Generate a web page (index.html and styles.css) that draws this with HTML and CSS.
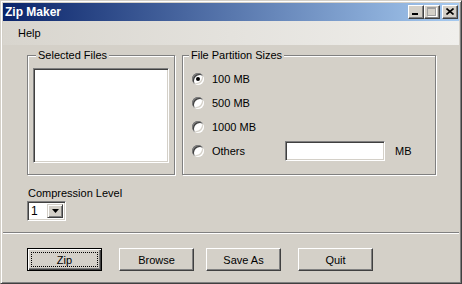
FILE: index.html
```html
<!DOCTYPE html>
<html lang="en">
<head>
  <meta charset="UTF-8" />
  <title>Zip Maker</title>
  <link rel="stylesheet" href="styles.css">
</head>
<body>
  <div class="window">
    <div class="titlebar">
      <span class="title">Zip Maker</span>
      <div class="caption-buttons">
        <span class="cap min"><span class="min-bar"></span></span>
        <span class="cap max"><span class="max-box"></span></span>
        <span class="cap close">
          <svg width="8" height="7" viewBox="0 0 8 7">
            <path d="M0.5 0.5 L7.5 6.5 M7.5 0.5 L0.5 6.5" stroke="#000" stroke-width="1.6" fill="none"/>
          </svg>
        </span>
      </div>
    </div>

    <div class="menubar">
      <span class="menu-item">Help</span>
    </div>

    <div class="content">
      <div class="groups">
        <fieldset class="group files">
          <legend>Selected Files</legend>
          <div class="listbox"></div>
        </fieldset>

        <fieldset class="group sizes">
          <legend>File Partition Sizes</legend>
          <div class="option"><span class="radio checked"></span><span class="option-text">100 MB</span></div>
          <div class="option"><span class="radio"></span><span class="option-text">500 MB</span></div>
          <div class="option"><span class="radio"></span><span class="option-text">1000 MB</span></div>
          <div class="option">
            <span class="radio"></span><span class="option-text other">Others</span>
            <span class="textbox"></span><span class="unit">MB</span>
          </div>
        </fieldset>
      </div>

      <div class="compression">
        <div class="field-label">Compression Level</div>
        <div class="combo">
          <span class="combo-value">1</span>
          <span class="combo-btn">
            <svg width="7" height="4" viewBox="0 0 7 4"><polygon points="0,0 7,0 3.5,4" fill="#000"/></svg>
          </span>
        </div>
      </div>
    </div>

    <div class="separator"></div>

    <div class="buttons">
      <div class="btn default"><span class="focus">Zip</span></div>
      <div class="btn">Browse</div>
      <div class="btn save">Save As</div>
      <div class="btn">Quit</div>
    </div>
  </div>
</body>
</html>
```

FILE: styles.css
```css
body {
  margin: 0;
  font-family: "Liberation Sans", Arial, sans-serif;
  font-size: 11px;
  color: #000;
  background: #d4d0c8;
}
.window {
  width: 462px;
  height: 284px;
  box-sizing: border-box;
  border: 1px solid;
  border-color: #d4d0c8 #404040 #404040 #d4d0c8;
  box-shadow: inset 1px 1px #fff, inset -1px -1px #808080;
  padding: 2px;
  background: #d4d0c8;
  display: flex;
  flex-direction: column;
}

/* title bar */
.titlebar {
  height: 18px;
  flex-shrink: 0;
  display: flex;
  align-items: center;
  justify-content: space-between;
  padding: 0 1px 0 2px;
  background: linear-gradient(to right, #0a246a, #a6caf0);
}
.title {
  color: #fff;
  font-weight: bold;
  font-size: 12px;
}
.caption-buttons {
  display: flex;
}
.cap {
  width: 16px;
  height: 14px;
  box-sizing: border-box;
  border: 1px solid;
  border-color: #fff #404040 #404040 #fff;
  box-shadow: inset -1px -1px #808080;
  background: #d4d0c8;
  display: flex;
}
.cap.min {
  align-items: flex-end;
  padding: 0 0 3px 3px;
}
.min-bar {
  width: 6px;
  height: 2px;
  background: #000;
}
.cap.max {
  align-items: flex-start;
  padding: 1px 0 0 2px;
}
.max-box {
  width: 9px;
  height: 9px;
  box-sizing: border-box;
  border: 1px solid #a0a0a0;
  border-top-width: 2px;
  box-shadow: 1px 1px #fff;
}
.cap.close {
  margin-left: 2px;
  align-items: center;
  justify-content: center;
  padding-bottom: 1px;
}

/* menu */
.menubar {
  height: 24px;
  flex-shrink: 0;
  display: flex;
  align-items: center;
  padding-left: 15px;
  background: linear-gradient(to right, #d8d5ce, #f0efec);
}

/* main area */
.content {
  flex: 1;
}
.groups {
  display: flex;
  align-items: stretch;
  padding: 4px 0 0 24px;
}
.group {
  margin: 0;
  border: 1px solid #808080;
  box-shadow: inset 1px 1px #fff, 1px 1px #fff;
  min-width: 0;
  box-sizing: border-box;
}
.group legend {
  padding: 0 2px;
  line-height: 13px;
  background: #d4d0c8;
}
.files {
  width: 148px;
  padding: 6px 5px 11px 5px;
}
.files legend {
  margin-left: 3px;
}
.listbox {
  width: 136px;
  height: 95px;
  box-sizing: border-box;
  background: #fff;
  border: 1px solid;
  border-color: #808080 #fff #fff #808080;
  box-shadow: inset 1px 1px #404040, inset -1px -1px #d4d0c8;
}
.sizes {
  width: 254px;
  margin-left: 7px;
  padding: 5px 6px 11px 6px;
}
.option {
  height: 24px;
  display: flex;
  align-items: center;
  padding-left: 3px;
}
.radio {
  width: 12px;
  height: 12px;
  border-radius: 50%;
  background: #fff;
  box-shadow: inset 1px 1px #808080, inset -1px -1px #fff, inset 2px 2px #404040, inset -2px -2px #d4d0c8;
  display: flex;
  align-items: center;
  justify-content: center;
}
.radio.checked::after {
  content: "";
  width: 4px;
  height: 4px;
  border-radius: 50%;
  background: #000;
}
.option-text {
  margin-left: 8px;
}
.option-text.other {
  width: 73px;
}
.textbox {
  width: 100px;
  height: 20px;
  box-sizing: border-box;
  background: #fff;
  border: 1px solid;
  border-color: #808080 #fff #fff #808080;
  box-shadow: inset 1px 1px #404040, inset -1px -1px #d4d0c8;
}
.unit {
  margin-left: 10px;
}

.compression {
  padding: 12px 0 0 24px;
}
.field-label {
  line-height: 13px;
  padding-left: 1px;
}
.combo {
  margin-top: 1px;
  width: 39px;
  height: 20px;
  box-sizing: border-box;
  background: #fff;
  border: 1px solid;
  border-color: #808080 #fff #fff #808080;
  box-shadow: inset 1px 1px #404040, inset -1px -1px #d4d0c8;
  padding: 2px;
  display: flex;
  align-items: center;
  justify-content: space-between;
}
.combo-value {
  font-size: 12px;
  padding-left: 1px;
}
.combo-btn {
  width: 16px;
  height: 14px;
  box-sizing: border-box;
  background: #d4d0c8;
  border: 1px solid;
  border-color: #d4d0c8 #404040 #404040 #d4d0c8;
  box-shadow: inset 1px 1px #fff, inset -1px -1px #808080;
  display: flex;
  align-items: center;
  justify-content: center;
}

/* bottom */
.separator {
  flex-shrink: 0;
  border-top: 1px solid #808080;
  border-bottom: 1px solid #fff;
  box-sizing: border-box;
  height: 2px;
}
.buttons {
  height: 47px;
  flex-shrink: 0;
  box-sizing: border-box;
  display: flex;
  align-items: flex-start;
  gap: 17px;
  padding: 14px 0 0 24px;
}
.btn {
  width: 75px;
  height: 23px;
  box-sizing: border-box;
  border: 1px solid;
  border-color: #fff #404040 #404040 #fff;
  box-shadow: inset -1px -1px #808080;
  display: flex;
  align-items: center;
  justify-content: center;
}
.btn.save {
  margin-left: -5px;
}
.btn.default {
  border-color: #000;
  box-shadow: inset 1px 1px #fff, inset -1px -1px #404040, inset -2px -2px #808080;
  padding: 3px;
}
.focus {
  flex: 1;
  align-self: stretch;
  border: 1px dotted #000;
  display: flex;
  align-items: center;
  justify-content: center;
}
```
